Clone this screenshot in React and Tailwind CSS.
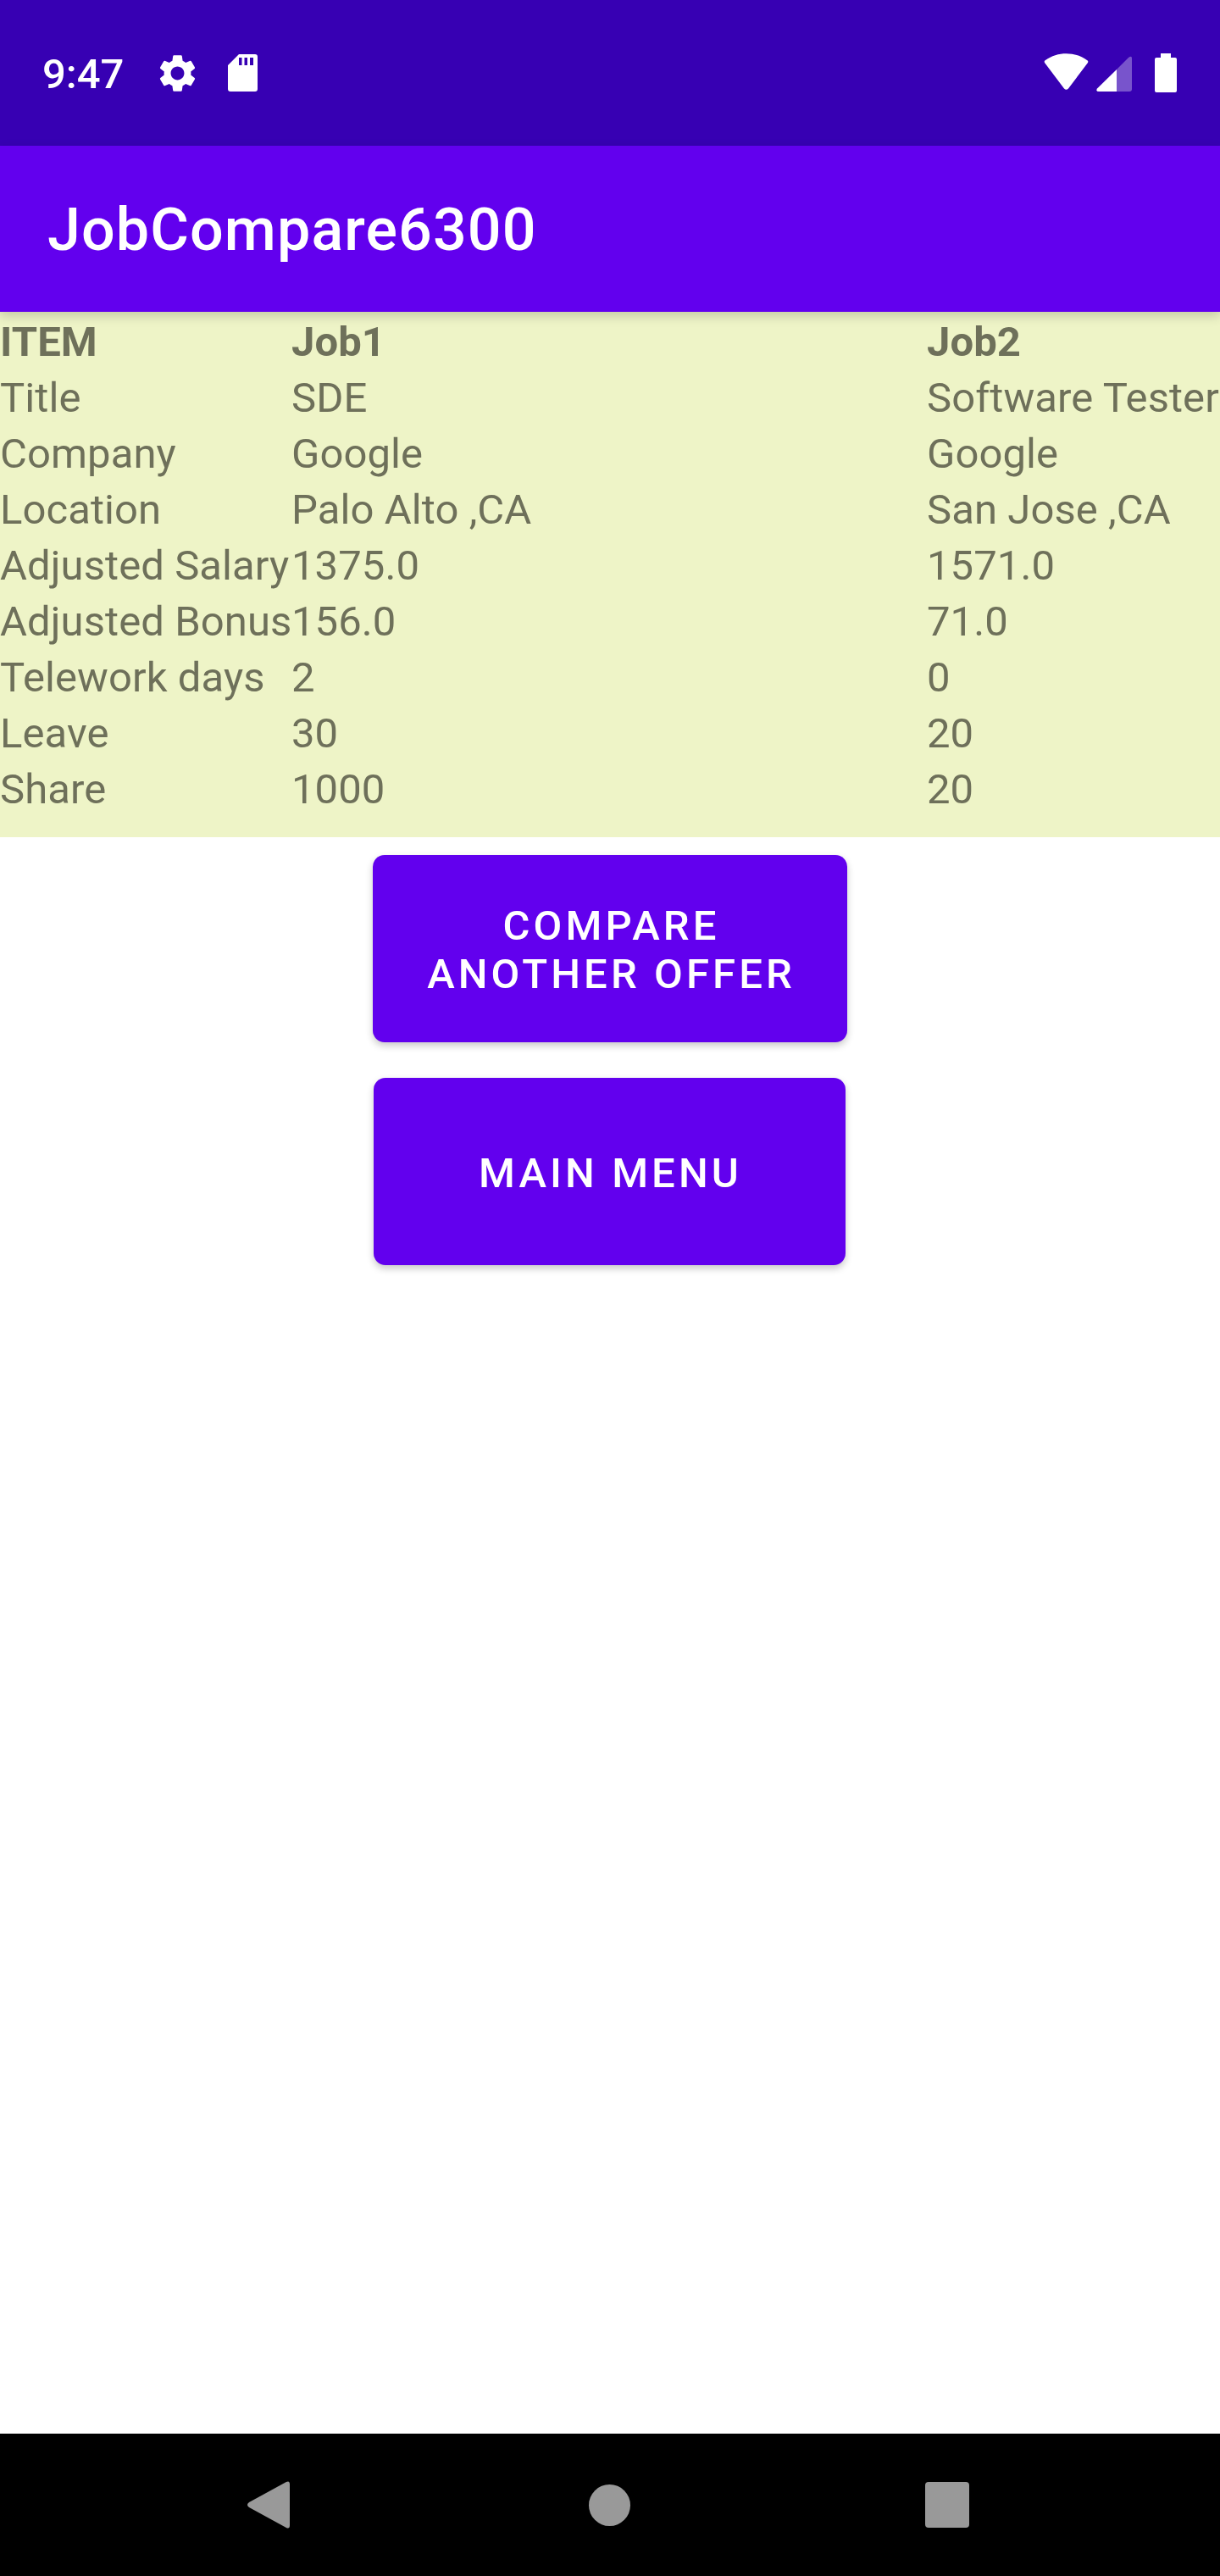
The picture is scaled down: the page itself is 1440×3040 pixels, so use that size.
import React from 'react';

const rows = [
  ['ITEM', 'Job1', 'Job2'],
  ['Title', 'SDE', 'Software Tester'],
  ['Company', 'Google', 'Google'],
  ['Location', 'Palo Alto ,CA', 'San Jose ,CA'],
  ['Adjusted Salary', '1375.0', '1571.0'],
  ['Adjusted Bonus', '156.0', '71.0'],
  ['Telework days', '2', '0'],
  ['Leave', '30', '20'],
  ['Share', '1000', '20'],
];

function StatusBar() {
  return (
    <div className="flex h-[172px] shrink-0 items-center bg-[#3700B3] text-white">
      <span className="ml-[50px] w-[95px] pt-[2px] text-[49px] leading-[57px] font-medium whitespace-nowrap">9:47</span>
      {/* settings gear */}
      <svg className="ml-[38px] h-[53px] w-[53px]" viewBox="0 0 24 24" fill="#fff">
        <path d="M19.14 12.94c.04-.3.06-.61.06-.94 0-.32-.02-.64-.07-.94l2.03-1.58c.18-.14.23-.41.12-.61l-1.92-3.32c-.12-.22-.37-.29-.59-.22l-2.39.96c-.5-.38-1.03-.7-1.62-.94l-.36-2.54c-.04-.24-.24-.41-.48-.41h-3.84c-.24 0-.43.17-.47.41l-.36 2.54c-.59.24-1.13.57-1.62.94l-2.39-.96c-.22-.08-.47 0-.59.22L2.74 8.87c-.12.21-.08.47.12.61l2.03 1.58c-.05.3-.09.63-.09.94s.02.64.07.94l-2.03 1.58c-.18.14-.23.41-.12.61l1.92 3.32c.12.22.37.29.59.22l2.39-.96c.5.38 1.03.7 1.62.94l.36 2.54c.05.24.24.41.48.41h3.84c.24 0 .44-.17.47-.41l.36-2.54c.59-.24 1.13-.56 1.62-.94l2.39.96c.22.08.47 0 .59-.22l1.92-3.32c.12-.22.07-.47-.12-.61l-2.01-1.58zM12 15.6c-1.98 0-3.6-1.62-3.6-3.6s1.62-3.6 3.6-3.6 3.6 1.62 3.6 3.6-1.62 3.6-3.6 3.6z" />
      </svg>
      {/* sd card */}
      <svg className="ml-[33px] h-[44px] w-[35px]" viewBox="0 0 35 44" fill="#fff" fillRule="evenodd">
        <path d="M13 0H32Q35 0 35 3V41Q35 44 32 44H3Q0 44 0 41V13ZM13 4V13H16.5V4ZM19.5 4V13H23V4ZM26 4V13H30V4Z" />
      </svg>
      <div className="ml-auto flex items-center">
        {/* wifi */}
        <svg className="mb-[3px] h-[43px] w-[53px]" viewBox="0 0 53 43" fill="#fff">
          <path d="M1 11Q0 9 2 8C16-2.5 37-2.5 51 8Q53 9 52 11L29 41.5Q26.5 44 24 41.5Z" />
        </svg>
        {/* signal */}
        <svg className="ml-[9px] mt-[2px] h-[42px] w-[42px]" viewBox="0 0 42 42" fill="#fff">
          <path d="M1 38.5L24 16V42H3Q-1 42 1 38.5Z" />
          <path opacity="0.33" d="M24 16L38 2Q42-1 42 3V39Q42 42 39 42H24Z" />
        </svg>
        {/* battery */}
        <svg className="ml-[27px] mr-[51px] h-[46px] w-[26px]" viewBox="0 0 26 46" fill="#fff">
          <path d="M7 0H19V5H24Q26 5 26 7V44Q26 46 24 46H2Q0 46 0 44V7Q0 5 2 5H7Z" />
        </svg>
      </div>
    </div>
  );
}

function OfferTable() {
  return (
    <div className="bg-[#EEF4C7] pt-[3px] pb-[23px] text-[49px] leading-[66px] tracking-[0.08px] text-[#6E705A]">
      {rows.map((row, i) => (
        <div key={row[0]} className={`grid grid-cols-[344px_750px_346px] whitespace-nowrap ${i === 0 ? 'font-bold' : ''}`}>
          <span>{row[0]}</span>
          <span>{row[1]}</span>
          <span>{row[2]}</span>
        </div>
      ))}
    </div>
  );
}

function ActionButton({ className, children }) {
  return (
    <button className={`flex h-[221px] items-center justify-center rounded-[14px] bg-[#6200EE] pt-[3px] pl-[3px] text-center text-[49px] leading-[57px] font-medium tracking-[4.1px] text-white shadow-[0_4px_9px_rgba(0,0,0,0.22)] ${className}`}>
      {children}
    </button>
  );
}

export default function App() {
  return (
    <div className="flex h-[3040px] w-[1440px] flex-col overflow-hidden bg-white font-['Roboto',sans-serif]">
      <StatusBar />
      <div className="relative z-10 flex h-[196px] shrink-0 items-center bg-[#6200EE] pt-[3px] pl-[56px] text-[70px] font-medium tracking-[1.1px] text-white shadow-[0_5px_12px_rgba(0,0,0,0.17)]">
        JobCompare6300
      </div>
      <OfferTable />
      <div className="flex flex-1 flex-col items-center">
        <ActionButton className="mt-[21px] w-[560px]">
          COMPARE
          <br />
          ANOTHER OFFER
        </ActionButton>
        <ActionButton className="mt-[42px] mr-[2px] w-[557px]">MAIN MENU</ActionButton>
      </div>
      {/* nav bar */}
      <div className="flex h-[168px] shrink-0 items-center bg-black pl-[292px]">
        <svg className="h-[56px] w-[50px]" viewBox="0 0 49 56" fill="#999" preserveAspectRatio="none">
          <path d="M45 1Q49-1 49 4V52Q49 57 45 55L2 31Q-2 28 2 25Z" />
        </svg>
        <div className="ml-[353px] h-[49px] w-[49px] rounded-full bg-[#999]"></div>
        <div className="ml-[348px] h-[54px] w-[52px] rounded-[4px] bg-[#999]"></div>
      </div>
    </div>
  );
}
